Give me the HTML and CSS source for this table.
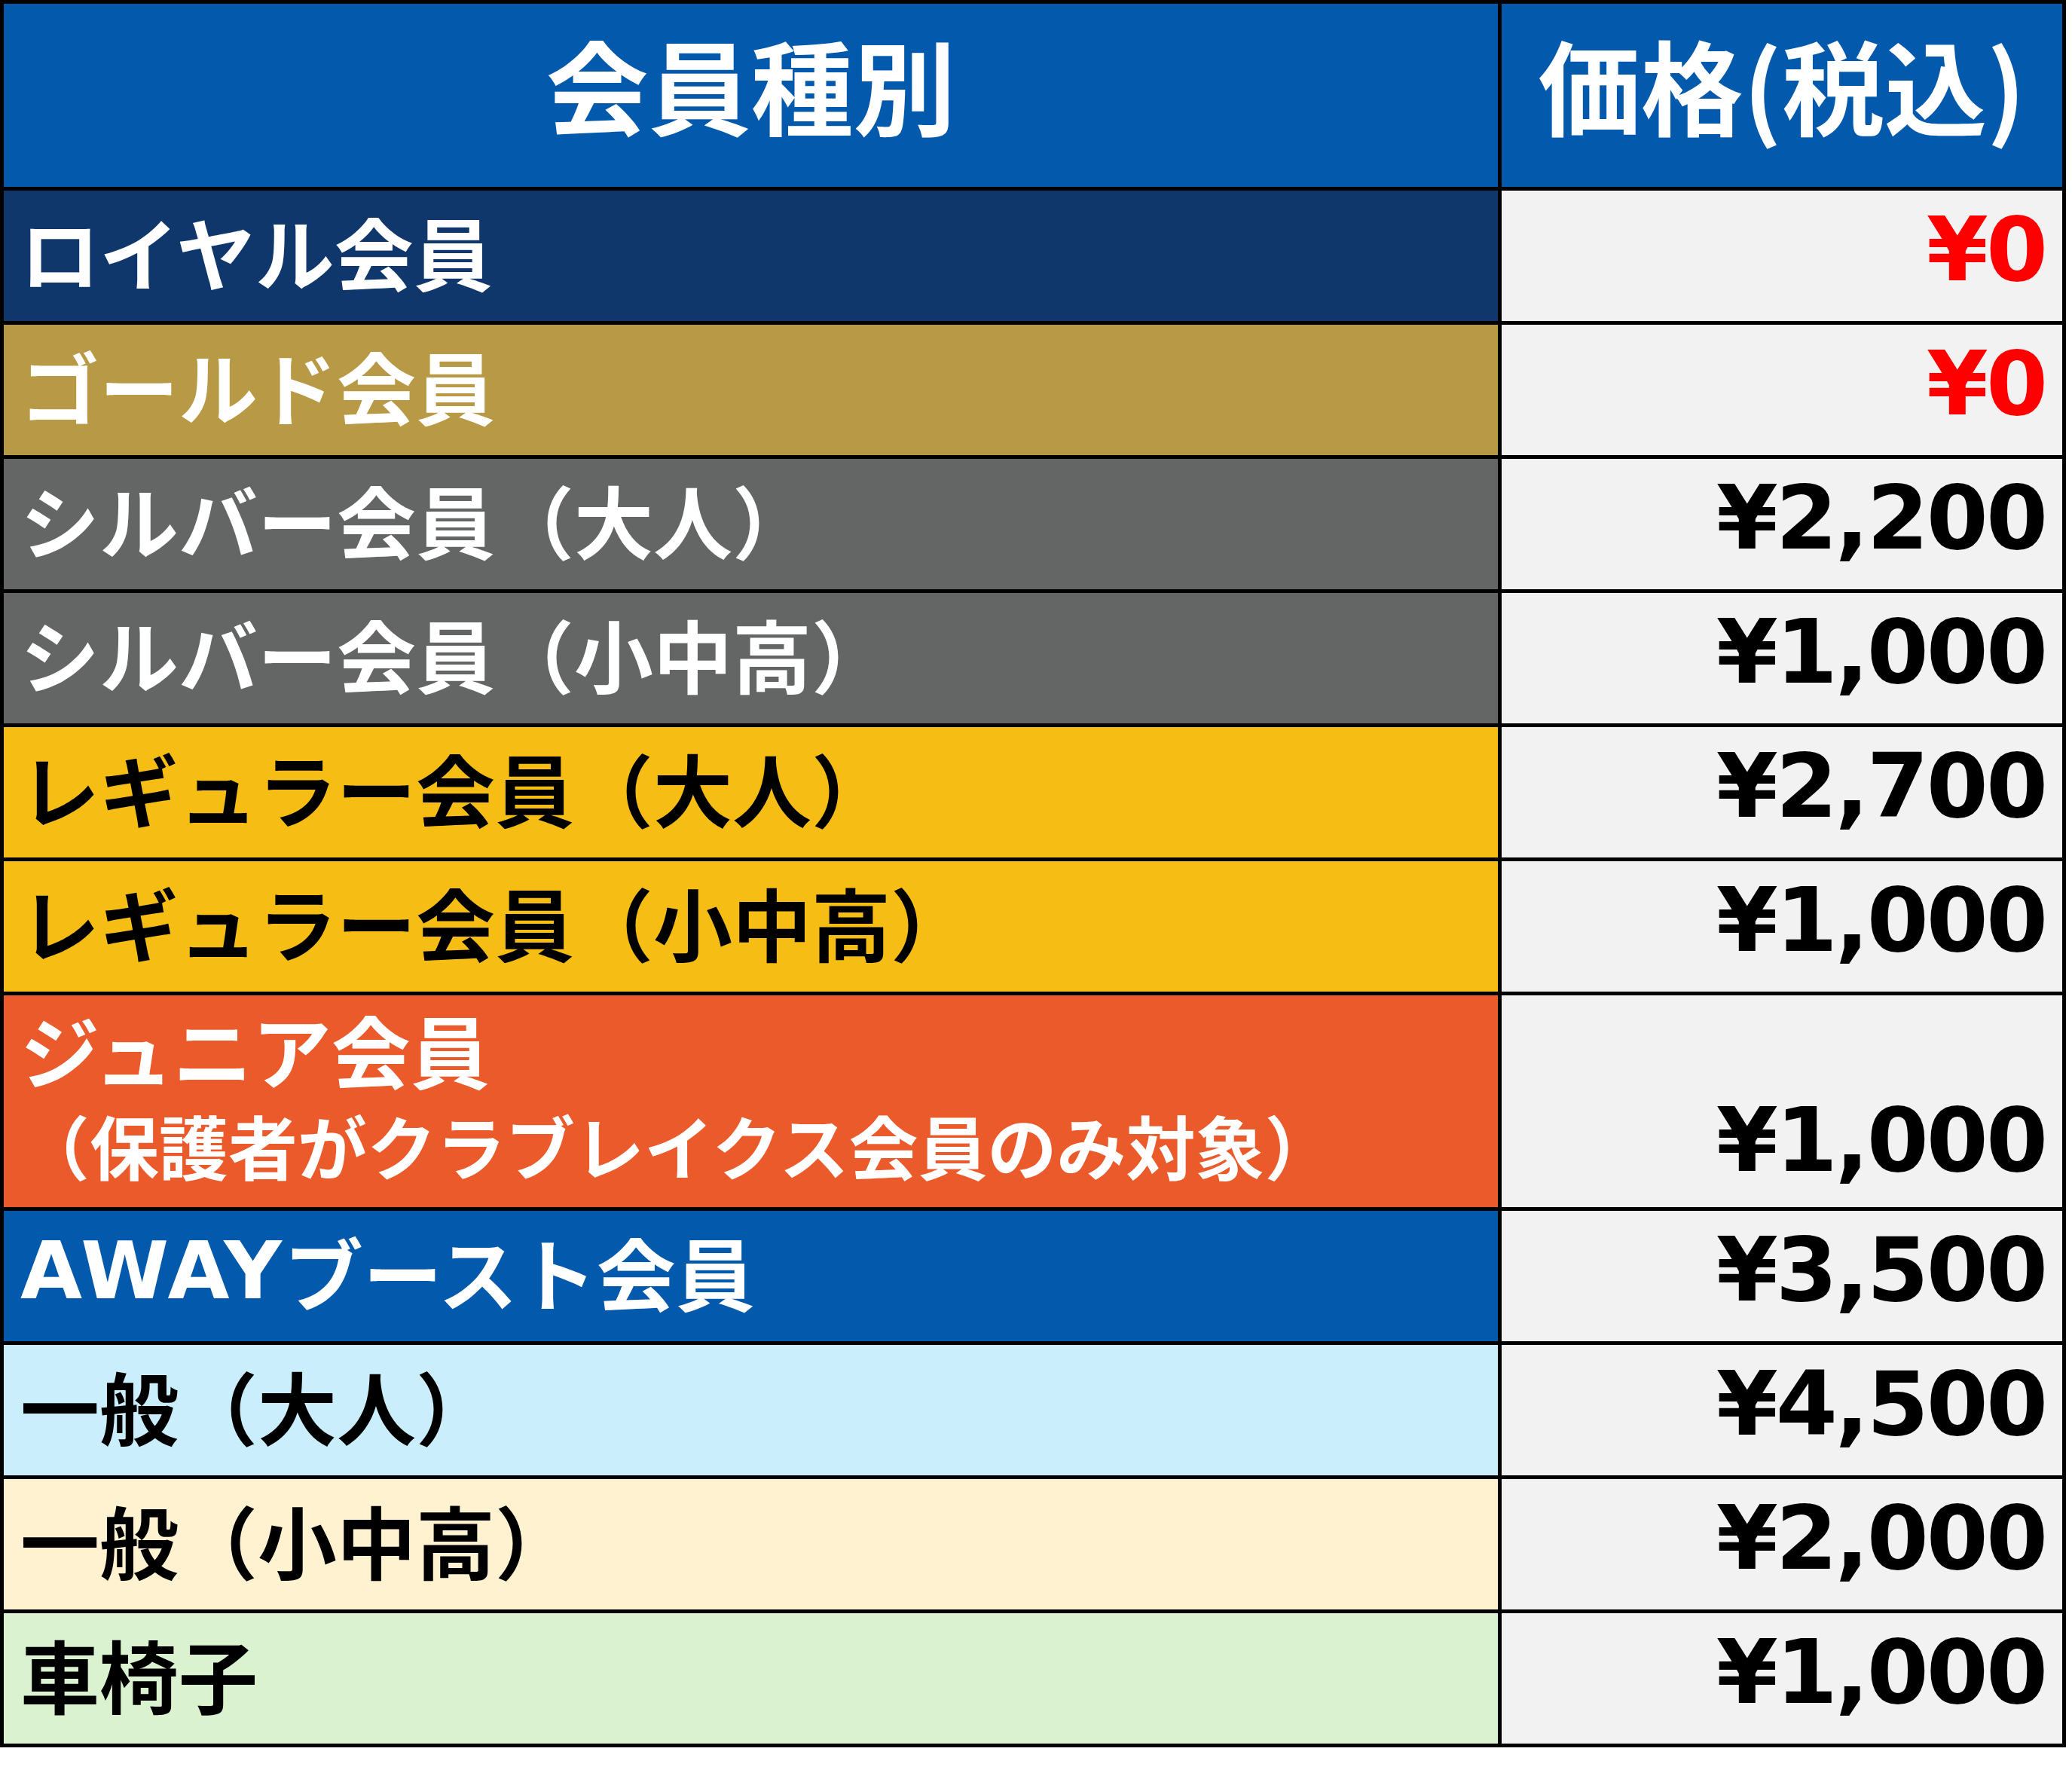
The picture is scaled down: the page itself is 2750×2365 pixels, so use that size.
FILE: index.html
```html
<!DOCTYPE html>
<html lang="ja">
<head>
<meta charset="utf-8">
<title>会員種別 価格</title>
<link rel="stylesheet" href="styles.css">
</head>
<body>
<div class="price-table">
  <div class="cell head">会員種別</div>
  <div class="cell head">価格(税込)</div>

  <div class="cell label royal">ロイヤル会員</div>
  <div class="cell price red">¥0</div>

  <div class="cell label gold">ゴールド会員</div>
  <div class="cell price red">¥0</div>

  <div class="cell label silver">シルバー会員（大人）</div>
  <div class="cell price">¥2,200</div>

  <div class="cell label silver">シルバー会員（小中高）</div>
  <div class="cell price">¥1,000</div>

  <div class="cell label regular">レギュラー会員（大人）</div>
  <div class="cell price">¥2,700</div>

  <div class="cell label regular">レギュラー会員（小中高）</div>
  <div class="cell price">¥1,000</div>

  <div class="cell label junior">
    <span class="line1">ジュニア会員</span>
    <span class="line2">（保護者がクラブレイクス会員のみ対象）</span>
  </div>
  <div class="cell price tall">¥1,000</div>

  <div class="cell label away"><span class="latin">AWAY</span>ブースト会員</div>
  <div class="cell price">¥3,500</div>

  <div class="cell label general-adult">一般（大人）</div>
  <div class="cell price">¥4,500</div>

  <div class="cell label general-child">一般（小中高）</div>
  <div class="cell price">¥2,000</div>

  <div class="cell label wheelchair">車椅子</div>
  <div class="cell price">¥1,000</div>
</div>
</body>
</html>
```

FILE: styles.css
```css
html, body {
  margin: 0;
  padding: 0;
  background: #ffffff;
}

.price-table {
  display: grid;
  width: 2742px;
  box-sizing: border-box;
  grid-template-columns: 1983px 744px;
  grid-template-rows: 243px repeat(6, 173px) 281px repeat(4, 173px);
  gap: 5px;
  padding: 5px;
  background: #000000;
  font-family: "Noto Sans CJK JP", "Noto Sans", sans-serif;
  font-weight: 700;
}

.cell {
  display: flex;
  align-items: center;
  box-sizing: border-box;
}

.head {
  background: #0359ab;
  color: #ffffff;
  justify-content: center;
  font-size: 136px;
  line-height: 1.3;
  padding-bottom: 30px;
}

.label {
  font-size: 105px;
  line-height: 1.3;
  padding-left: 22px;
  padding-bottom: 14px;
  white-space: nowrap;
}

.latin {
  font-family: "DejaVu Sans", "Liberation Sans", sans-serif;
  font-weight: 700;
  font-size: 106px;
  letter-spacing: 3px;
}

.royal { background: #10376c; color: #ffffff; }
.gold { background: #b89a46; color: #ffffff; }
.silver { background: #646665; color: #ffffff; }
.regular { background: #f6be15; color: #000000; }
.junior { background: #ea5a2a; color: #ffffff; }
.away { background: #0359ab; color: #ffffff; }
.general-adult { background: #cbeefc; color: #000000; }
.general-child { background: #fff2d0; color: #000000; }
.wheelchair { background: #daf2d0; color: #000000; }

.junior {
  flex-direction: column;
  align-items: flex-start;
  justify-content: center;
}

.junior .line1 {
  display: block;
  font-size: 105px;
  line-height: 128px;
}

.junior .line2 {
  display: block;
  font-size: 92px;
  line-height: 128px;
}

.price {
  background: #f2f2f2;
  color: #000000;
  justify-content: flex-end;
  align-items: flex-end;
  font-family: "DejaVu Sans", "Liberation Sans", sans-serif;
  font-weight: 700;
  font-size: 118px;
  letter-spacing: -3px;
  line-height: 1;
  padding-right: 22px;
  padding-bottom: 36px;
}

.price.tall {
  padding-bottom: 30px;
}

.red {
  color: #ff0000;
}
```
